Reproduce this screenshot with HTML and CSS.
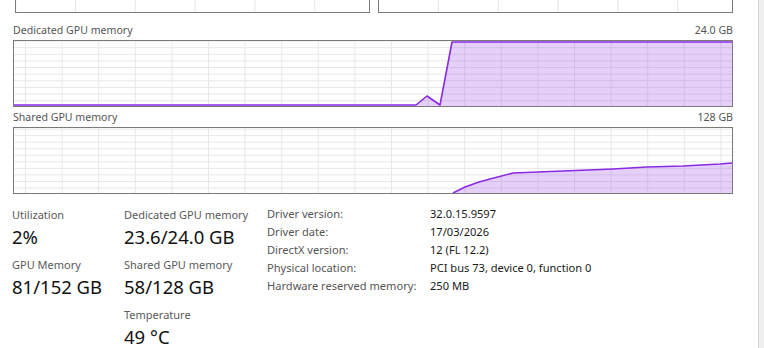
FILE: index.html
```html
<!DOCTYPE html>
<html lang="en">
<head>
    <meta charset="UTF-8">
    <meta name="viewport" content="width=device-width, initial-scale=1.0">
    <title>GPU memory</title>
    <link rel="stylesheet" href="styles.css">
</head>
<body>
<div class="window">
    <div class="content">
        <div class="mini-row">
            <div class="mini"></div>
            <div class="mini"></div>
        </div>

        <div class="graph-head">
            <span>Dedicated GPU memory</span>
            <span>24.0 GB</span>
        </div>
        <svg class="plot" width="720" height="67" viewBox="0 0 720 67">
            <defs>
                <pattern id="grid1" patternUnits="userSpaceOnUse" x="12" y="0.6" width="36.6" height="6.62">
                    <path d="M0.5 0V6.62M0 0.5H36.6" stroke="#e7e7e7" stroke-width="1" fill="none"/>
                </pattern>
            </defs>
            <rect x="0" y="0" width="720" height="67" fill="#fff"/>
            <rect x="1" y="1" width="718" height="65" fill="url(#grid1)"/>
            <polygon class="area" points="1,65 403,65 414,56 427,65 439,2 719,2 719,66 1,66"/>
            <polyline class="line" points="1,65 403,65 414,56 427,65 439,2 719,2"/>
            <rect class="frame" x="0.5" y="0.5" width="719" height="66"/>
        </svg>

        <div class="graph-head">
            <span>Shared GPU memory</span>
            <span>128 GB</span>
        </div>
        <svg class="plot" width="720" height="67" viewBox="0 0 720 67">
            <defs>
                <pattern id="grid2" patternUnits="userSpaceOnUse" x="12" y="1.6" width="36.6" height="6.55">
                    <path d="M0.5 0V6.55M0 0.5H36.6" stroke="#e7e7e7" stroke-width="1" fill="none"/>
                </pattern>
            </defs>
            <rect x="0" y="0" width="720" height="67" fill="#fff"/>
            <rect x="1" y="1" width="718" height="65" fill="url(#grid2)"/>
            <polygon class="area" points="440,66 452,60 466,55 477,52 500,46 550,44 600,42 634,40 670,39 707,37 719,36 719,66"/>
            <polyline class="line" points="440,66 452,60 466,55 477,52 500,46 550,44 600,42 634,40 670,39 707,37 719,36"/>
            <rect class="frame" x="0.5" y="0.5" width="719" height="66"/>
        </svg>

        <div class="details">
            <div class="stats">
                <div class="stat">
                    <div class="stat-label">Utilization</div>
                    <div class="stat-value">2%</div>
                </div>
                <div class="stat">
                    <div class="stat-label">Dedicated GPU memory</div>
                    <div class="stat-value">23.6/24.0 GB</div>
                </div>
                <div class="stat">
                    <div class="stat-label">GPU Memory</div>
                    <div class="stat-value">81/152 GB</div>
                </div>
                <div class="stat">
                    <div class="stat-label">Shared GPU memory</div>
                    <div class="stat-value">58/128 GB</div>
                </div>
                <div class="stat"></div>
                <div class="stat">
                    <div class="stat-label">Temperature</div>
                    <div class="stat-value">49 °C</div>
                </div>
            </div>

            <dl class="info">
                <dt>Driver version:</dt><dd>32.0.15.9597</dd>
                <dt>Driver date:</dt><dd>17/03/2026</dd>
                <dt>DirectX version:</dt><dd>12 (FL 12.2)</dd>
                <dt>Physical location:</dt><dd>PCI bus 73, device 0, function 0</dd>
                <dt>Hardware reserved memory:</dt><dd>250 MB</dd>
            </dl>
        </div>
    </div>
    <div class="scrollbar"></div>
</div>
</body>
</html>
```

FILE: styles.css
```css
body {
    margin: 0;
    background: #fff;
    font-family: 'Noto Sans', 'Open Sans', sans-serif;
    color: #1a1a1a;
    overflow: hidden;
}
.window {
    display: flex;
    height: 348px;
}
.content {
    flex: 1;
    padding-left: 13px;
}
.scrollbar {
    width: 5px;
    background: #f0f0f0;
    border-left: 1px solid #d4d4d4;
}

.mini-row {
    display: flex;
    gap: 8px;
    margin-left: 2px;
}
.mini {
    width: 353px;
    height: 12px;
    border: 1px solid #7a7a7a;
    border-top: none;
    background-image: linear-gradient(to right, #e6e6e6 1px, transparent 1px);
    background-size: 59.8px 100%;
    background-position: 59px 0;
}

.graph-head {
    display: flex;
    justify-content: space-between;
    width: 720px;
    height: 16px;
    margin-top: 11px;
    font-size: 10.6px;
    line-height: 13px;
    color: #555;
}
.plot + .graph-head {
    margin-top: 4px;
}
.plot {
    display: block;
}
.plot .area {
    fill: #8a2be2;
    fill-opacity: 0.22;
}
.plot .line {
    fill: none;
    stroke: #8a2be2;
    stroke-width: 1.6;
    stroke-linejoin: round;
}
.plot .frame {
    fill: none;
    stroke: #7a7a7a;
    stroke-width: 1;
}

.details {
    display: flex;
    margin-top: 13px;
}
.stats {
    display: grid;
    grid-template-columns: 112px 143px;
    margin-left: -1px;
    align-content: start;
}
.stat {
    height: 50px;
}
.stat-label {
    font-size: 11px;
    line-height: 16px;
    color: #5a5a5a;
}
.stat-value {
    margin-top: 1px;
    font-size: 18.5px;
    line-height: 26px;
    color: #111;
}

.info {
    display: grid;
    grid-template-columns: 163px auto;
    margin: -2px 0 0 0;
    font-size: 11.1px;
    line-height: 18px;
    align-content: start;
}
.info dt {
    color: #555;
}
.info dd {
    margin: 0;
    color: #1a1a1a;
}
```
